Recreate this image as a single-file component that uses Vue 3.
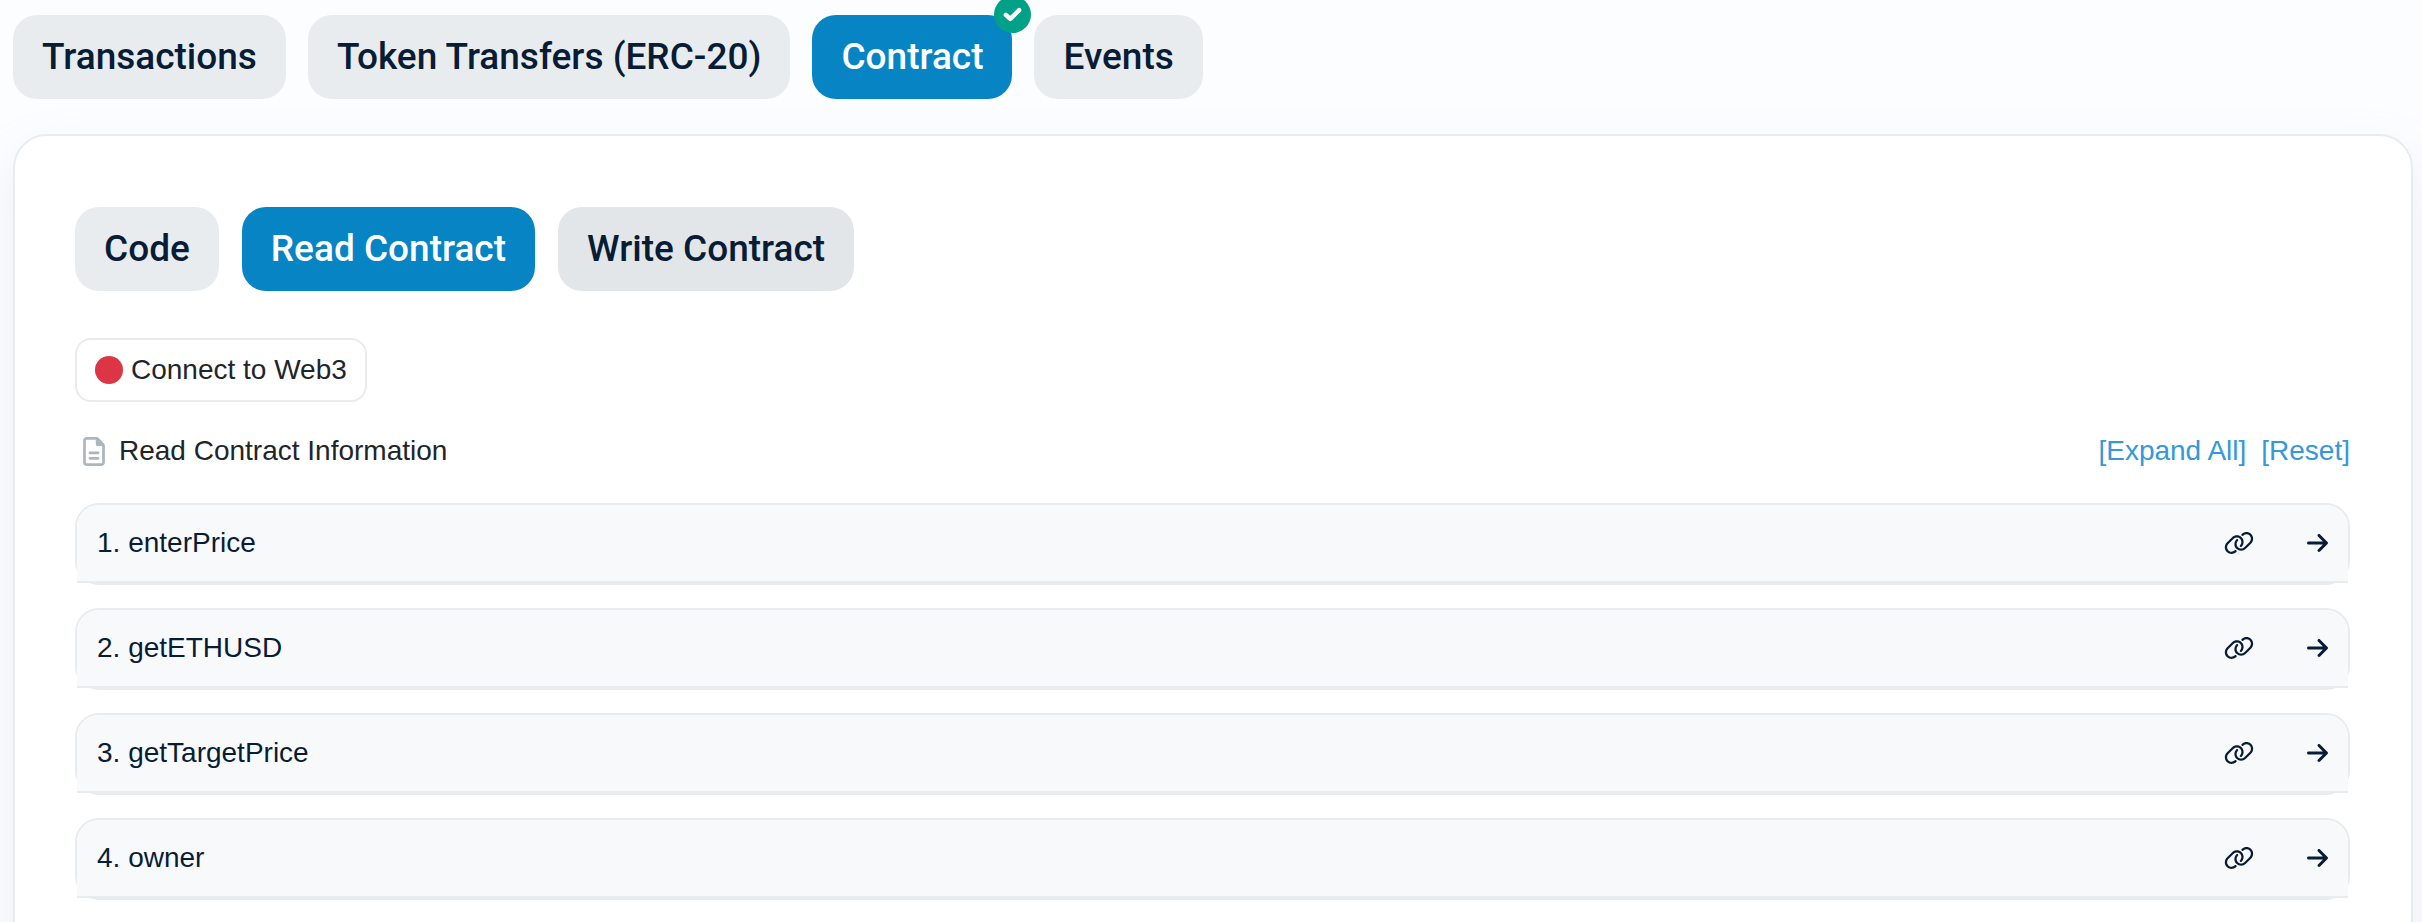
<script setup>
import { ref } from 'vue'

const tabs = ['Transactions', 'Token Transfers (ERC-20)', 'Contract', 'Events']
const modes = ['Code', 'Read Contract', 'Write Contract']
const methods = ['enterPrice', 'getETHUSD', 'getTargetPrice', 'owner']

const activeTab = ref('Contract')
const activeMode = ref('Read Contract')
</script>

<template>
  <main class="page">
    <nav class="pills" aria-label="Address sections">
      <button
        v-for="tab in tabs"
        :key="tab"
        type="button"
        class="pill"
        :class="{ active: tab === activeTab }"
        @click="activeTab = tab"
      >
        {{ tab }}
        <svg v-if="tab === 'Contract'" class="badge" viewBox="0 0 512 512" aria-hidden="true">
          <circle cx="256" cy="256" r="256" fill="#00a186" />
          <path d="M164 262 L224 318 L348 195" fill="none" stroke="#fff" stroke-width="62" stroke-linecap="round" stroke-linejoin="round" />
        </svg>
      </button>
    </nav>

    <section class="card">
      <div class="pills" role="group" aria-label="Contract views">
        <button
          v-for="mode in modes"
          :key="mode"
          type="button"
          class="pill"
          :class="{ active: mode === activeMode, shaded: mode === 'Write Contract' }"
          @click="activeMode = mode"
        >
          {{ mode }}
        </button>
      </div>

      <button type="button" class="connect"><span class="dot"></span>Connect to Web3</button>

      <div class="info">
        <h2 class="info-title">
          <svg class="file" viewBox="0 0 384 512" aria-hidden="true">
            <path d="M64 464c-8.800 0-16-7.200-16-16V64c0-8.800 7.200-16 16-16H224v80c0 17.700 14.300 32 32 32h80V448c0 8.800-7.200 16-16 16H64zM64 0C28.700 0 0 28.700 0 64V448c0 35.300 28.700 64 64 64H320c35.300 0 64-28.700 64-64V154.500c0-17-6.700-33.300-18.700-45.300L274.700 18.700C262.700 6.700 246.500 0 229.500 0H64zm56 256c-13.300 0-24 10.700-24 24s10.700 24 24 24H264c13.300 0 24-10.700 24-24s-10.700-24-24-24H120zm0 96c-13.300 0-24 10.700-24 24s10.700 24 24 24H264c13.300 0 24-10.700 24-24s-10.700-24-24-24H120z" />
          </svg>
          Read Contract Information
        </h2>
        <div class="links">
          <a href="#expand">[Expand All]</a>
          <a href="#reset">[Reset]</a>
        </div>
      </div>

      <ol class="methods">
        <li v-for="(name, i) in methods" :key="name" class="method">
          <div class="method-head">
            <button type="button" class="method-name">{{ i + 1 }}. {{ name }}</button>
            <button type="button" class="icon-button" :aria-label="`Copy link to ${name}`">
              <svg class="link-icon" viewBox="0 0 640 512" aria-hidden="true">
                <path d="M580.3 267.2c56.2-56.2 56.2-147.3 0-203.5C526.8 10.2 440.9 7.3 383.9 57.2l-6.1 5.4c-10 8.700-11 23.900-2.300 33.900s23.900 11 33.900 2.300l6.100-5.400c38-33.200 95.200-31.300 130.900 4.400c37.400 37.400 37.400 98.100 0 135.600L433.100 346.600c-37.400 37.400-98.200 37.400-135.600 0c-35.700-35.700-37.600-92.900-4.400-130.900l4.700-5.400c8.700-10 7.700-25.100-2.300-33.900s-25.100-7.700-33.900 2.300l-4.700 5.400c-49.800 57-46.900 142.900 6.600 196.400c56.200 56.200 147.300 56.200 203.500 0L580.3 267.2zM59.7 244.800C3.500 301 3.500 392.100 59.700 448.200c53.600 53.600 139.500 56.400 196.500 6.500l6.100-5.400c10-8.700 11-23.900 2.300-33.900s-23.900-11-33.900-2.300l-6.100 5.400c-38 33.200-95.200 31.300-130.900-4.400c-37.400-37.400-37.400-98.100 0-135.600L207 165.400c37.400-37.400 98.100-37.400 135.600 0c35.700 35.700 37.600 92.900 4.400 130.900l-5.400 6.100c-8.700 10-7.700 25.100 2.300 33.900s25.100 7.700 33.900-2.300l5.400-6.100c49.900-57 47-142.900-6.500-196.500c-56.200-56.200-147.300-56.200-203.500 0L59.700 244.800z" />
              </svg>
            </button>
            <button type="button" class="icon-button" :aria-label="`Open ${name}`">
              <svg class="arrow-icon" viewBox="0 0 448 512" aria-hidden="true">
                <path d="M438.6 278.6c12.5-12.5 12.5-32.8 0-45.3l-160-160c-12.5-12.5-32.8-12.5-45.3 0s-12.5 32.8 0 45.3L338.8 224 32 224c-17.7 0-32 14.3-32 32s14.3 32 32 32l306.7 0L233.4 393.4c-12.5 12.5-12.5 32.8 0 45.3s32.8 12.5 45.3 0l160-160z" />
              </svg>
            </button>
          </div>
        </li>
      </ol>
    </section>
  </main>
</template>

<style>
body {
  background: #fcfdff;
}
</style>

<style scoped>
.page {
  box-sizing: border-box;
  min-height: 100vh;
  padding: 15px 9px 0 13px;
  overflow: hidden;
  color: #212529;
  font-family: "Liberation Sans", Arial, sans-serif;
  font-size: 28px;
  line-height: 42px;
}

button {
  margin: 0;
  padding: 0;
  border: 0;
  background: none;
  color: inherit;
  font: inherit;
  cursor: pointer;
}

.pills {
  display: flex;
  gap: 23px;
}

nav.pills {
  gap: 22px;
}

.pill {
  position: relative;
  padding: 20px 29px;
  border-radius: 24px;
  background: #e9ecef;
  color: #081d35;
  font-family: Roboto, sans-serif;
  font-size: 37px;
  font-weight: 500;
  line-height: 44px;
  white-space: nowrap;
}

.pill.shaded {
  background: #e2e6e9;
}

.pill.active {
  background: #0784c3;
  color: #fff;
}

.badge {
  position: absolute;
  top: -19px;
  right: -19px;
  width: 37px;
  height: 37px;
}

.card {
  margin-top: 35px;
  padding: 71px 61px 60px 60px;
  border: 2px solid #e9ecef;
  border-radius: 34px;
  background: #fff;
  box-shadow: 0 18px 42px rgba(189, 197, 209, 0.25);
}

.connect {
  display: flex;
  align-items: center;
  gap: 8px;
  margin-top: 47px;
  padding: 9px 18px;
  border: 2px solid #e9ecef;
  border-radius: 16px;
}

.dot {
  width: 28px;
  height: 28px;
  border-radius: 50%;
  background: #dc3545;
}

.info {
  display: flex;
  align-items: center;
  justify-content: space-between;
  margin-top: 28px;
}

.info-title {
  display: flex;
  align-items: center;
  gap: 14px;
  margin: 0;
  padding-left: 8px;
  font-size: 28px;
  font-weight: 400;
}

.file {
  width: 22px;
  height: 29px;
  fill: #adb5bd;
}

.links {
  display: flex;
  gap: 15px;
}

.links a {
  color: #3498db;
  text-decoration: none;
}

.methods {
  display: grid;
  gap: 23px;
  margin: 31px 0 0;
  padding: 0;
  list-style: none;
}

.method {
  border: 2px solid #e9ecef;
  border-radius: 24px;
}

.method-head {
  display: flex;
  align-items: center;
  padding: 17px 20px;
  border-bottom: 2px solid #e9ecef;
  border-radius: 22px 22px 0 0;
  background: #f8f9fb;
  color: #081d35;
}

.method-name {
  flex: 1;
  text-align: left;
}

.icon-button {
  display: flex;
  margin-left: 53px;
}

.link-icon {
  width: 30px;
  height: 24px;
  fill: currentColor;
}

.arrow-icon {
  width: 21px;
  height: 24px;
  fill: currentColor;
}
</style>
